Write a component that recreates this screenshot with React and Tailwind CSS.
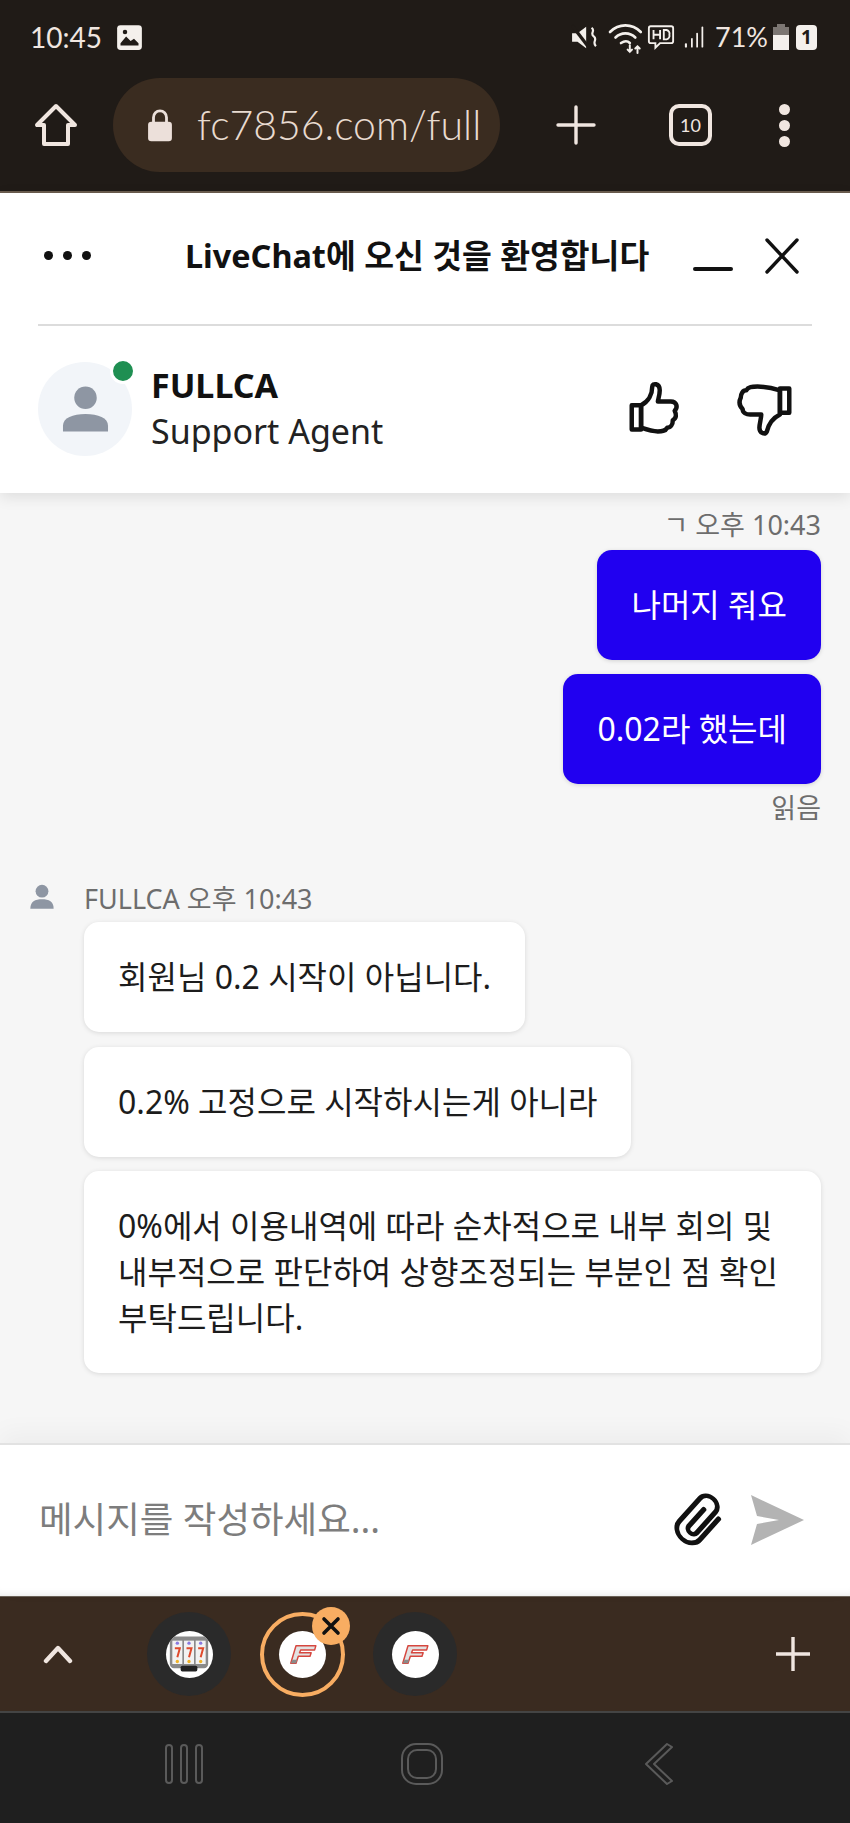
import React from 'react';

function Bubble({ children, mine }) {
  return (
    <div className={`px-[34px] py-[32px] rounded-[15px] text-[32px] leading-[46px] break-keep ${mine ? 'bg-[#2100f0] text-white shadow-[0_1px_4px_rgba(0,0,0,0.15)]' : 'bg-white text-[#1c1c1c] shadow-[0_1px_5px_rgba(0,0,0,0.12)]'}`}>
      {children}
    </div>
  );
}

function SlotLogo() {
  return (
    <svg viewBox="0 0 48 48" className="w-[40px] h-[40px]">
      <rect x="1" y="3" width="46" height="38" rx="5" fill="#8a8a8a" />
      <rect x="4" y="8" width="12" height="28" fill="#f2f2f2" />
      <rect x="18" y="8" width="12" height="28" fill="#f2f2f2" />
      <rect x="32" y="8" width="12" height="28" fill="#f2f2f2" />
      <path d="M7 17h6l-3 11M21 17h6l-3 11M35 17h6l-3 11" fill="none" stroke="#e04a2c" strokeWidth="2.4" />
      <circle cx="10" cy="11" r="2" fill="#8a7ae0" /><circle cx="24" cy="11" r="2" fill="#8a7ae0" /><circle cx="38" cy="11" r="2" fill="#8a7ae0" />
      <circle cx="10" cy="33" r="2" fill="#f0b429" /><circle cx="24" cy="33" r="2" fill="#f0b429" /><circle cx="38" cy="33" r="2" fill="#f0b429" />
      <rect x="14" y="38" width="20" height="7" rx="2" fill="#222" />
    </svg>
  );
}

function FLogo() {
  return (
    <svg viewBox="0 0 48 40" className="w-[28px] h-[24px]">
      <path d="M12 6 L46 6 L44 13 L20 13 L18 18 L38 18 L36 24 L16 24 L12 36 L3 36 Z" fill="#e2e2e2" stroke="#d6473f" strokeWidth="2.5" strokeLinejoin="round" />
      <path d="M6 30 L14 30 L12 36 L3 36 Z" fill="#8a8a8a" />
    </svg>
  );
}

export default function App() {
  return (
    <div className="w-[850px] h-[1823px] flex flex-col overflow-hidden bg-[#f6f6f6] font-['Noto_Sans','Noto_Sans_CJK_KR',sans-serif]">
      {/* browser chrome */}
      <div className="h-[193px] shrink-0 bg-[#201b17] border-b-2 border-[#6b5d4f] text-[#f0e6e0]">
        <div className="h-[72px] flex items-center justify-between pl-[30px] pr-[33px] pt-[2px]">
          <div className="flex items-center gap-[14px]">
            <span className="text-[28px] font-['Lato',sans-serif]">10:45</span>
            <svg viewBox="0 0 24 24" className="w-[27px] h-[27px]">
              <rect x="1" y="1" width="22" height="22" rx="3" fill="#f4f0ec" />
              <path d="M4 17l5-6 4 4 3-2 4 4v2H4z" fill="#201b17" />
              <circle cx="8" cy="7" r="2" fill="#201b17" />
            </svg>
          </div>
          <div className="flex items-center">
            <svg viewBox="1 2 24 24" className="w-[26px] h-[27px]" fill="#f4f0ec">
              <path d="M2 10h5l8-6v20l-8-6H2z" />
              <path d="M2 3l16 21" stroke="#201b17" strokeWidth="3" />
              <path d="M20 5c4 3-2 5 2 8s-2 5 2 9" stroke="#f4f0ec" strokeWidth="2" fill="none" />
            </svg>
            <svg viewBox="0 0 34 30" className="w-[41px] h-[33px] ml-[9px]" fill="none" stroke="#f4f0ec" strokeWidth="2.4" strokeLinecap="round">
              <path d="M2 10c8-8 20-8 28 0" />
              <path d="M7 15c5-5 13-5 18 0" />
              <path d="M12 20c3-2 6-2 8 0" />
              <path d="M20 22v6M18 26l2 2 2-2M27 29v-6M25 25l2-2 2 2" strokeWidth="1.8" />
            </svg>
            <svg viewBox="0 0 30 28" className="w-[28px] h-[27px]" fill="none" stroke="#f4f0ec" strokeWidth="2">
              <path d="M4 2h22a2 2 0 0 1 2 2v14a2 2 0 0 1-2 2H14l-5 5v-5H4a2 2 0 0 1-2-2V4a2 2 0 0 1 2-2z" />
              <path d="M7 6v10M14 6v10M7 11h7M18 6v10h3a4 4 0 0 0 3-5 4 4 0 0 0-3-5z" />
            </svg>
            <svg viewBox="0 0 24 26" className="w-[21px] h-[26px] ml-[9px]" fill="#f4f0ec">
              <rect x="1" y="20" width="2.4" height="5" rx="1" />
              <rect x="8" y="14" width="2" height="11" rx="1" />
              <rect x="14" y="8" width="2" height="17" rx="1" />
              <rect x="20" y="1" width="2" height="24" rx="1" />
            </svg>
            <span className="text-[27px] font-['Lato',sans-serif] ml-[10px]">71%</span>
            <svg viewBox="0 0 16 26" className="w-[18px] h-[26px] ml-[4px]">
              <path d="M4 0h8v3h4v23H0V3h4z" fill="#f4f0ec" />
              <path d="M4 0h8v3h4v8H0V3h4z" fill="#7c7672" />
            </svg>
            <span className="w-[21px] h-[25px] ml-[6px] rounded-[4px] bg-[#f4f0ec] text-[#201b17] text-[19px] font-bold leading-[25px] text-center">1</span>
          </div>
        </div>
        <div className="flex items-center h-[94px] mt-[6px] pl-[34px]">
          <svg viewBox="0 0 44 44" className="w-[44px] h-[46px]" fill="none" stroke="#f0e6e0" strokeWidth="4" strokeLinejoin="round">
            <path d="M22 3L3 22h7v19h24V22h7z" />
          </svg>
          <div className="ml-[35px] w-[387px] h-[94px] shrink-0 rounded-full bg-[#3a2c20] flex items-center pl-[34px] overflow-hidden">
            <svg viewBox="0 0 24 32" className="w-[26px] h-[36px] shrink-0">
              <path d="M6 14V9a6 6 0 0 1 12 0v5" fill="none" stroke="#ece0da" strokeWidth="2.6" />
              <rect x="1" y="13" width="22" height="18" rx="3" fill="#ece0da" />
            </svg>
            <span className="ml-[24px] text-[41px] text-[#e8dbd0] font-light font-['Lato',sans-serif] whitespace-nowrap">fc7856.com/full</span>
          </div>
          <svg viewBox="0 0 40 40" className="w-[40px] h-[40px] ml-[56px] shrink-0" stroke="#f0e6e0" strokeWidth="3.4" strokeLinecap="round">
            <path d="M20 2v36M2 20h36" />
          </svg>
          <div className="ml-[73px] w-[43px] h-[42px] shrink-0 rounded-[10px] border-[4px] border-[#f0e6e0] flex items-center justify-center text-[18px] font-['Lato',sans-serif]">10</div>
          <div className="ml-[67px] flex flex-col gap-[5px]">
            <span className="w-[11px] h-[11px] rounded-full bg-[#f0e6e0]" />
            <span className="w-[11px] h-[11px] rounded-full bg-[#f0e6e0]" />
            <span className="w-[11px] h-[11px] rounded-full bg-[#f0e6e0]" />
          </div>
        </div>
      </div>

      {/* chat header */}
      <div className="h-[300px] shrink-0 bg-white shadow-[0_4px_14px_rgba(0,0,0,0.1)] z-10 relative px-[38px]">
        <div className="h-[133px] flex items-center border-b-2 border-[#dcdcdc] pb-[6px]">
          <div className="flex gap-[10px] ml-[6px]">
            <span className="w-[9px] h-[9px] rounded-full bg-[#111]" />
            <span className="w-[9px] h-[9px] rounded-full bg-[#111]" />
            <span className="w-[9px] h-[9px] rounded-full bg-[#111]" />
          </div>
          <div className="ml-[94px] text-[32.4px] font-bold text-[#111] whitespace-nowrap">LiveChat에 오신 것을 환영합니다</div>
          <span className="ml-[44px] mt-[26px] w-[40px] h-[4px] rounded-sm bg-[#111] shrink-0" />
          <svg viewBox="0 0 36 36" className="ml-[31px] w-[36px] h-[36px] shrink-0" stroke="#111" strokeWidth="3.4" strokeLinecap="round">
            <path d="M3 2l30 32M33 2L3 34" />
          </svg>
        </div>
        <div className="flex items-center h-[165px]">
          <div className="relative w-[94px] h-[94px] rounded-full bg-[#f2f5f9] flex items-center justify-center">
            <svg viewBox="0 0 48 46" className="w-[47px] h-[46px]" fill="#8e96a3">
              <circle cx="24" cy="11.5" r="11.5" />
              <path d="M1 46v-6c0-8 10-12 23-12s23 4 23 12v6z" />
            </svg>
            <span className="absolute top-[-4px] right-[-4px] w-[26px] h-[26px] rounded-full bg-[#1f8f52] border-[3px] border-white" />
          </div>
          <div className="ml-[19px] flex-1">
            <div className="text-[34px] font-bold leading-[44px] text-[#111]">FULLCA</div>
            <div className="text-[34px] leading-[48px] text-[#222]">Support Agent</div>
          </div>
          <svg viewBox="0 0 30 30" className="w-[56px] h-[56px]" fill="none" stroke="#111" strokeWidth="2.4" strokeLinejoin="round">
            <path d="M2 13h5v13H2z" />
            <path d="M7 13c4-2 6-6 6-10 0-2 4-2 4 2 0 3-1 5-1 6h7c3 0 4 3 2 5 1 2 1 4-1 5 0 2-1 4-3 4-1 2-3 2-5 2-3 0-6-1-9-2z" />
          </svg>
          <svg viewBox="0 0 30 30" className="ml-[53px] mr-[19px] w-[56px] h-[56px]" fill="none" stroke="#111" strokeWidth="2.4" strokeLinejoin="round">
            <path d="M28 4h-5v13h5z" />
            <path d="M23 5c-3-1-6-2-12-2-3 0-5 0-6 2-2 0-3 2-3 4-1 2-1 4 1 6 0 2 2 3 4 3h6c0 2-1 5-1 7 0 3 3 4 4 2 1-4 3-7 7-9z" />
          </svg>
        </div>
      </div>

      {/* messages */}
      <div className="flex-1 flex flex-col px-[29px] pt-[15px]">
        <div className="flex flex-col items-end gap-[14.5px]">
          <div className="text-[27px] leading-[34px] -mb-[7px] text-[#6d6d6d]">ㄱ 오후 10:43</div>
          <Bubble mine>나머지 줘요</Bubble>
          <Bubble mine>0.02라 했는데</Bubble>
          <div className="text-[27px] leading-[34px] -mt-[8px] text-[#6d6d6d]">읽음</div>
        </div>
        <div className="flex items-start mt-[57px]">
          <svg viewBox="0 0 24 24" className="w-[28px] h-[28px] -ml-[1px] mt-[1px] shrink-0" fill="#8e96a3">
            <circle cx="12" cy="7" r="5.5" />
            <path d="M2 22c0-6 4-8 10-8s10 2 10 8z" />
          </svg>
          <div className="ml-[28px] flex flex-col items-start gap-[14.5px] flex-1">
            <div className="text-[27px] leading-[34px] -mb-[8px] text-[#6d6d6d]">FULLCA 오후 10:43</div>
            <Bubble>회원님 0.2 시작이 아닙니다.</Bubble>
            <Bubble>0.2% 고정으로 시작하시는게 아니라</Bubble>
            <Bubble>0%에서 이용내역에 따라 순차적으로 내부 회의 및 내부적으로 판단하여 상향조정되는 부분인 점 확인 부탁드립니다.</Bubble>
          </div>
        </div>
      </div>

      {/* input */}
      <div className="h-[153px] shrink-0 bg-white border-t-2 border-[#e2e2e2] shadow-[0_-10px_24px_rgba(0,0,0,0.04),inset_0_-8px_8px_-8px_rgba(0,0,0,0.12)] flex items-center pl-[39px] pr-[46px] pb-[2px] z-10">
        <div className="flex-1 text-[36.5px] text-[#7d7d7d]">메시지를 작성하세요...</div>
        <svg viewBox="5 0 22 44" preserveAspectRatio="none" className="w-[38px] h-[62px] rotate-[42deg]" fill="none" stroke="#111" strokeWidth="3" strokeLinecap="round">
          <path d="M24 12v20a8 8 0 0 1-16 0V10a6 6 0 0 1 12 0v20a3 3 0 0 1-6 0V14" />
        </svg>
        <svg viewBox="0 0 54 50" className="ml-[32px] w-[54px] h-[50px]" fill="#b3b3b3">
          <path d="M1 0l53 25L1 50l6-21 22-4-22-4z" />
        </svg>
      </div>

      {/* tab strip */}
      <div className="h-[115px] shrink-0 bg-[#3a2b20] border-t border-[#6b6258] flex items-center pl-[43px] pr-[39px]">
        <svg viewBox="0 0 30 20" className="w-[30px] h-[20px]" fill="none" stroke="#f0e6e0" strokeWidth="4.4" strokeLinecap="round" strokeLinejoin="round">
          <path d="M3 17L15 4l12 13" />
        </svg>
        <div className="w-[84px] h-[84px] ml-[74px] rounded-full bg-[#2a2a2a] flex items-center justify-center">
          <div className="w-[47px] h-[47px] rounded-full bg-white flex items-center justify-center overflow-hidden"><SlotLogo /></div>
        </div>
        <div className="relative w-[85px] h-[85px] ml-[29px] rounded-full border-[4px] border-[#f8ad62] flex items-center justify-center">
          <div className="w-[47px] h-[47px] rounded-full bg-white flex items-center justify-center"><FLogo /></div>
          <span className="absolute -top-[9px] -right-[9px] w-[38px] h-[38px] rounded-full bg-[#f8ad62] flex items-center justify-center">
            <svg viewBox="0 0 20 20" className="w-[20px] h-[20px]" stroke="#111" strokeWidth="3.6" strokeLinecap="round">
              <path d="M3 3l14 14M17 3L3 17" />
            </svg>
          </span>
        </div>
        <div className="w-[84px] h-[84px] ml-[28px] rounded-full bg-[#2a2a2a] flex items-center justify-center">
          <div className="w-[47px] h-[47px] rounded-full bg-white flex items-center justify-center"><FLogo /></div>
        </div>
        <svg viewBox="0 0 36 36" className="ml-auto w-[36px] h-[36px]" stroke="#f0e6e0" strokeWidth="3.4">
          <path d="M18 1v34M1 18h34" />
        </svg>
      </div>

      {/* android nav */}
      <div className="h-[112px] shrink-0 bg-[#1f1f1f] border-t-2 border-[#444] flex items-center pb-[8px]">
        <svg viewBox="0 0 38 40" className="ml-[165px] w-[38px] h-[40px]" fill="none" stroke="#5a5a5a" strokeWidth="2">
          <rect x="1" y="1" width="6" height="38" rx="3" />
          <rect x="16" y="1" width="6" height="38" rx="3" />
          <rect x="31" y="1" width="6" height="38" rx="3" />
        </svg>
        <svg viewBox="0 0 42 42" className="ml-[198px] w-[42px] h-[42px]" fill="none" stroke="#5a5a5a" strokeWidth="2">
          <rect x="1" y="1" width="40" height="40" rx="14" />
          <rect x="7" y="7" width="28" height="28" rx="9" />
        </svg>
        <svg viewBox="0 0 28 42" className="ml-[202px] w-[28px] h-[42px]" fill="none" stroke="#5a5a5a" strokeWidth="2" strokeLinejoin="round">
          <path d="M22 1l5 3L9 21l18 17-5 3L1 21z" />
        </svg>
      </div>
    </div>
  );
}
